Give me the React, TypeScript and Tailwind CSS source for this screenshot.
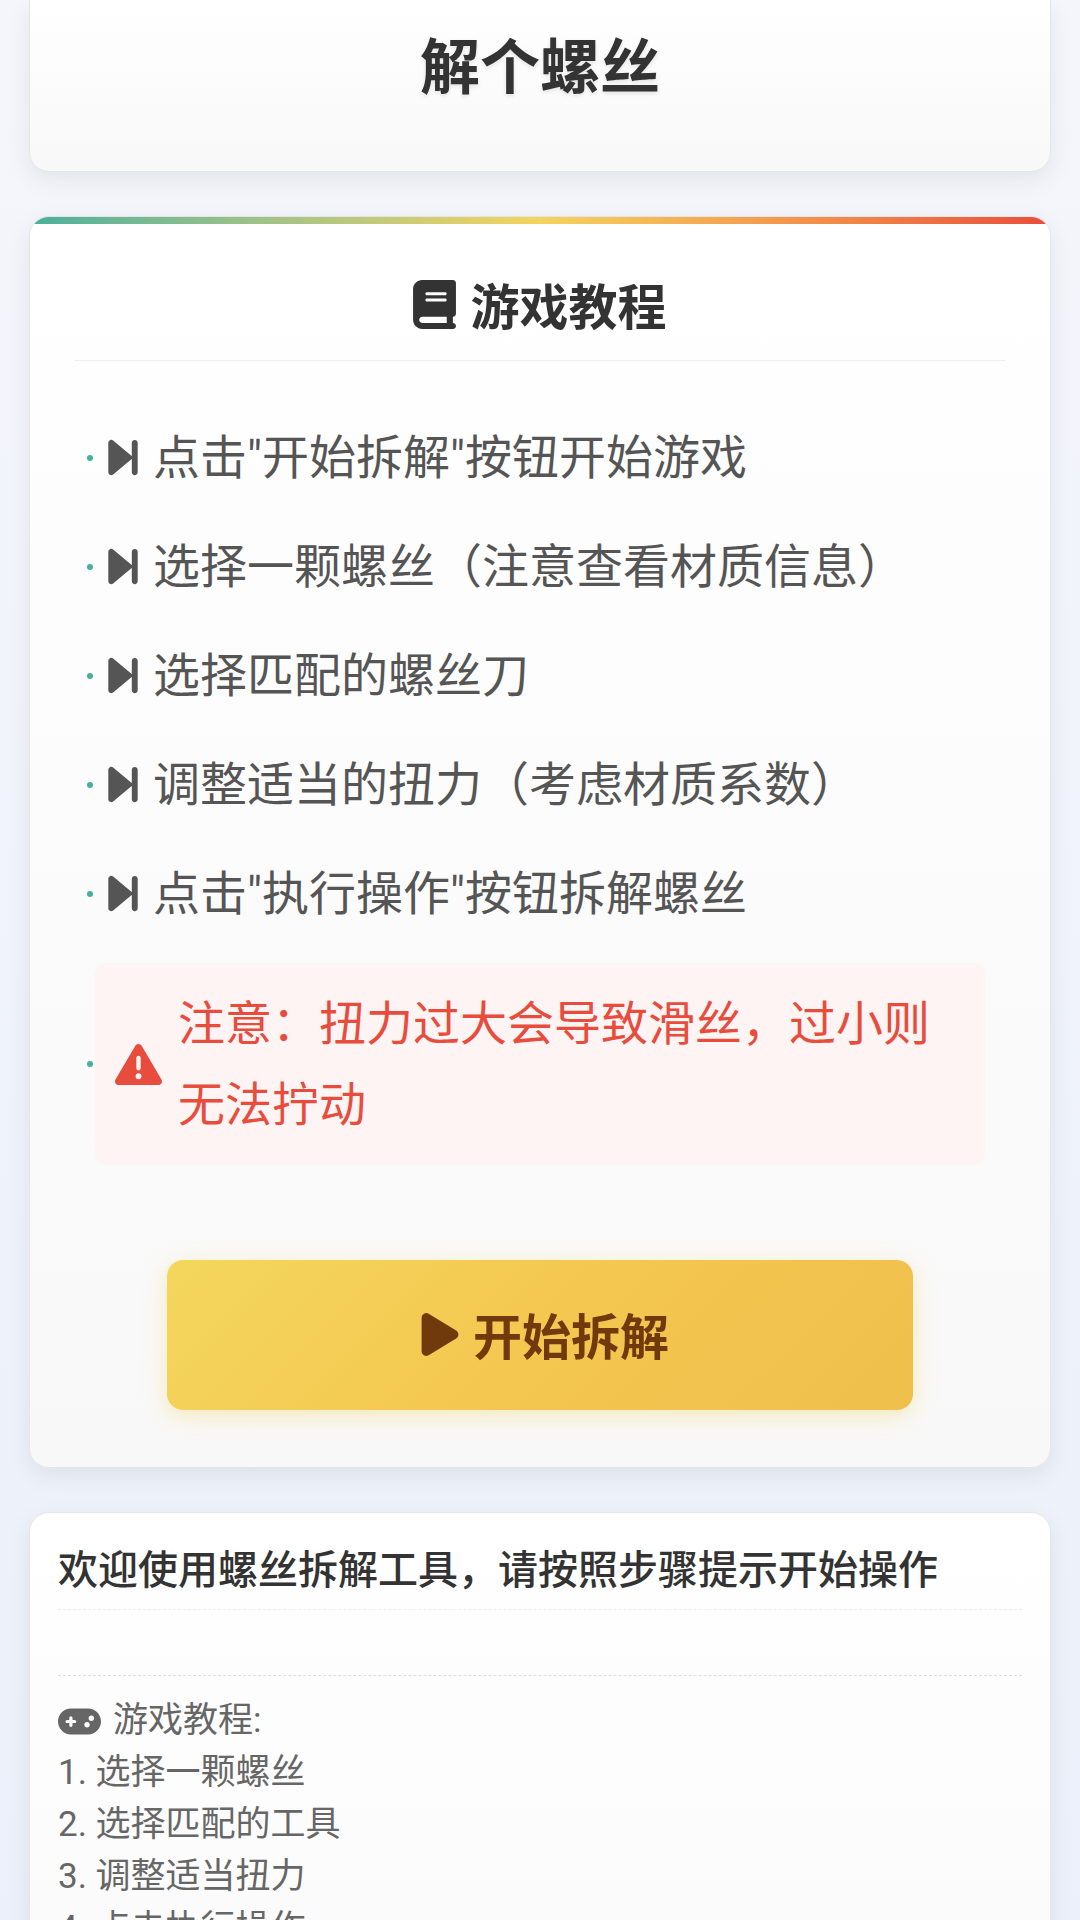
import { FaBook, FaForwardStep, FaTriangleExclamation, FaPlay, FaGamepad } from "react-icons/fa6";

const steps = [
  '点击"开始拆解"按钮开始游戏',
  "选择一颗螺丝（注意查看材质信息）",
  "选择匹配的螺丝刀",
  "调整适当的扭力（考虑材质系数）",
  '点击"执行操作"按钮拆解螺丝',
];

const logSteps = ["选择一颗螺丝", "选择匹配的工具", "调整适当扭力", "点击执行操作"];

const card =
  "rounded-[20px] border border-[#e4e5e7] bg-linear-to-b from-white to-[#f8f8f8] shadow-[0_8px_24px_rgba(0,0,0,0.07)]";

function Dot() {
  return <span className="absolute -left-2 size-[6px] rounded-full bg-[#46b09c]" />;
}

export default function App() {
  return (
    <div className="h-screen overflow-hidden bg-linear-to-b from-[#f4f6fb] to-[#ebf0fa] px-[29px] font-['Noto_Sans_CJK_SC',sans-serif] text-[#333]">
      <header className="h-[172px] rounded-b-[20px] border border-t-0 border-[#e4e5e7] bg-linear-to-b from-white to-[#f8f8f8] pt-[19px] text-center shadow-[0_8px_24px_rgba(0,0,0,0.07)]">
        <h1 className="text-[60px] leading-[88px] font-bold [text-shadow:0_2px_4px_rgba(0,0,0,0.1)]">解个螺丝</h1>
      </header>

      <main className={`mt-[44px] overflow-hidden ${card}`}>
        <div className="h-[7px] bg-linear-to-r from-[#46b09c] via-[#f4d35e] to-[#e74c3c]" />
        <div className="px-[44px] pb-[57px]">
          <h2 className="flex items-center justify-center gap-[14px] border-b border-[#eee] pt-[44px] pb-[20px] text-[49px] leading-[72px] font-bold">
            <FaBook className="h-[49px] w-[43px]" />
            游戏教程
          </h2>
          <ul className="mt-[42px] px-[21px] font-[Roboto,'Noto_Sans_CJK_SC',sans-serif] text-[47px] leading-[81px] text-[#555]">
            {steps.map((s) => (
              <li key={s} className="relative flex h-[109px] items-center gap-[14px] pl-[12px]">
                <Dot />
                <FaForwardStep className="h-[47px] w-[32px]" />
                {s}
              </li>
            ))}
            <li className="relative mt-[15px] flex items-center gap-[16px] rounded-[11px] bg-[#fff4f4] px-[20px] py-[20px] text-[#e74c3c]">
              <Dot />
              <FaTriangleExclamation className="size-[47px] shrink-0" />
              注意：扭力过大会导致滑丝，过小则无法拧动
            </li>
          </ul>
          <button className="mx-auto mt-[95px] flex h-[150px] w-4/5 items-center justify-center gap-[14px] rounded-[16px] bg-[linear-gradient(135deg,#f4d75e,#f4c750_50%,#efbf4c)] pb-[2px] pl-[10px] text-[49px] font-bold text-[#713a0d] shadow-[0_6px_22px_rgba(244,211,94,0.4)]">
            <FaPlay className="h-[49px] w-[38px]" />
            开始拆解
          </button>
        </div>
      </main>

      <section className={`mt-[44px] h-[700px] px-[28px] pt-[20px] ${card}`}>
        <p className="border-b border-dashed border-[#eee] pb-[8px] text-[40px] leading-[68px] font-medium">
          欢迎使用螺丝拆解工具，请按照步骤提示开始操作
        </p>
        <div className="mt-[65px] border-t border-dashed border-[#ddd] pt-[19px] font-[Roboto,'Noto_Sans_CJK_SC',sans-serif] text-[35px] leading-[52px] text-[#666]">
          <p className="flex items-center gap-[12px]">
            <FaGamepad className="h-[35px] w-[43px]" />
            游戏教程:
          </p>
          {logSteps.map((s, i) => (
            <p key={s}>
              {i + 1}. {s}
            </p>
          ))}
        </div>
      </section>
    </div>
  );
}
